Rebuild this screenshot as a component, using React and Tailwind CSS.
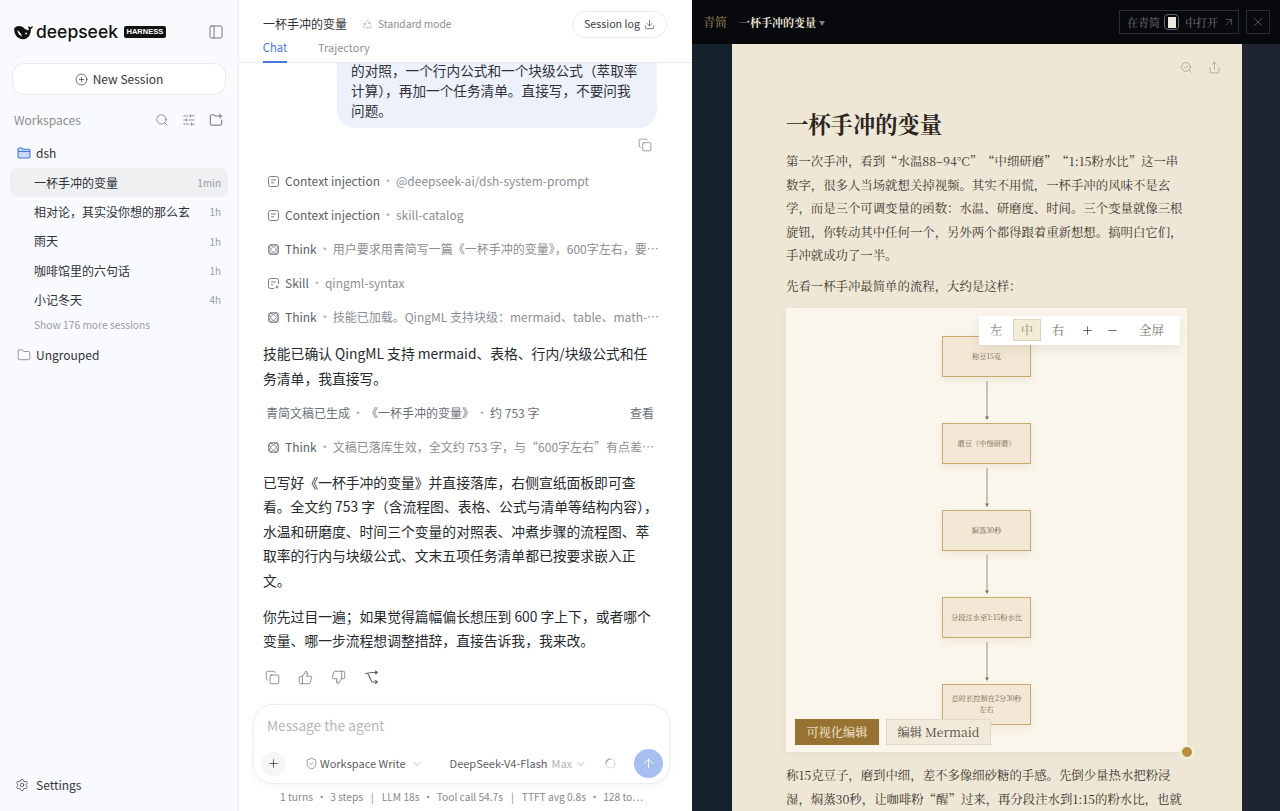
import React from "react";
import { PanelLeft, CirclePlus, Search, SlidersHorizontal, Folder, Settings, Copy, Download, Recycle, ThumbsUp, ThumbsDown, ShieldCheck, ChevronDown, Plus, ArrowUp, SearchCheck, Share, X, ArrowUpRight, Minus } from "lucide-react";

const Doc = () => (
  <svg width="13" height="13" viewBox="0 0 13 13" fill="none" stroke="#7c7f85" strokeWidth="1" className="shrink-0">
    <rect x="1.5" y="1.5" width="10" height="10" rx="2" />
    <path d="M4 5h5M4 7.800h3" />
  </svg>
);
const SkillIcon = () => (
  <svg width="13" height="13" viewBox="0 0 13 13" fill="none" stroke="#7c7f85" strokeWidth="1" className="shrink-0">
    <path d="M7 11.5H3.5a2 2 0 0 1-2-2v-6a2 2 0 0 1 2-2h6a2 2 0 0 1 2 2V7" />
    <path d="M4 5h5M4 7.800h2" />
    <path d="M10 8.500v3M8.500 10h3" />
  </svg>
);
const Think = () => (
  <svg width="13" height="13" viewBox="0 0 13 13" fill="none" stroke="#85888e" strokeWidth="0.9" className="shrink-0">
    <rect x="1.500" y="1.500" width="10" height="10" rx="2.500" />
    <ellipse cx="6.500" cy="6.500" rx="5.200" ry="2.500" transform="rotate(45 6.500 6.500)" />
    <ellipse cx="6.500" cy="6.500" rx="5.200" ry="2.500" transform="rotate(-45 6.500 6.500)" />
  </svg>
);
const Branch = () => (
  <svg width="15" height="15" viewBox="0 0 15 15" fill="none" stroke="#5f6268" strokeWidth="1.100" strokeLinejoin="round" strokeLinecap="round">
    <path d="M1.500 3.500 8 2.500H13" />
    <path d="M4 4 8 12H13" />
    <path d="M11.500 1 13.300 2.500 11.500 4" />
    <path d="M11.500 10.500 13.300 12 11.500 13.500" />
  </svg>
);
const FolderAdd = () => (
  <svg width="14" height="14" viewBox="0 0 14 14" fill="none" stroke="#6b6e74" strokeWidth="1" strokeLinecap="round" strokeLinejoin="round">
    <path d="M8 3H6L4.800 1.800H2.500a1.200 1.200 0 0 0-1.200 1.200v8a1.200 1.200 0 0 0 1.200 1.200h9a1.200 1.200 0 0 0 1.200-1.200V7" />
    <path d="M11 1v4M9 3h4" />
  </svg>
);
const BlueFolder = () => (
  <svg width="14" height="14" viewBox="0 0 14 14" className="shrink-0" fill="#c9d8f7" stroke="#4a77dc" strokeWidth="1.100" strokeLinejoin="round">
    <path d="M1 3.200a1.200 1.200 0 0 1 1.200-1.200h2.600L6 3.300h5.800A1.200 1.200 0 0 1 13 4.500v6.300a1.200 1.200 0 0 1-1.200 1.200H2.200A1.200 1.200 0 0 1 1 10.800z" />
    <path d="M1 5.500h12" fill="none" />
  </svg>
);
const Whale = () => (
  <svg width="20" height="16" viewBox="0 0 20 15" className="shrink-0">
    <path d="M.4 3.600C3 .6 7.500 1 10 3.500c1.500 1.500 3 2.400 4.500 2.200.6-1 .5-2.200-.6-3.300 1-.7 2-.1 2.400.7.500-1 1.700-1.400 2.900-1-.5 1.100-1.300 1.900-2.400 2.300.4 4-1.600 9.800-7.800 10.300C3.800 14.900-.6 9.800.4 3.600z" fill="#111" />
    <path d="M3.400 5.800c2.100 1.100 3.900 3.300 4.600 6.300-2.500-.9-4.300-3.300-4.600-6.300z" fill="#f9fafd" />
    <circle cx="12" cy="9" r="0.900" fill="#f9fafd" />
  </svg>
);

const Session = ({ title, time, active }) => (
  <div className={`flex h-[29.300px] items-center justify-between rounded-lg pl-6 pr-[7px] ${active ? "bg-[#eff0f2]" : ""}`}>
    <span className="text-[12px] text-[#2f3237]">{title}</span>
    <span className="text-[10px] text-[#9a9da3]">{time}</span>
  </div>
);

const Dot = () => <span className="flex w-4 shrink-0 justify-center text-[#b0b2b7]">·</span>;

const Step = ({ icon, label, detail }) => (
  <div className="flex h-[34px] w-[397px] items-center pl-[4px] text-[12px] leading-[20px]">
    {icon}
    <span className="ml-[5px] shrink-0 text-[#5e6167]">{label}</span>
    <Dot />
    <span className="truncate text-[#8b8e94]">{detail}</span>
  </div>
);

const Node = ({ children }) => (
  <div className="flex h-[41px] w-[89px] items-center justify-center border border-[#c8a96e] bg-[#f2e8d5] px-1 text-center text-[7.250px] leading-[11px] text-[#6e5f45] shadow-[0_3px_8px_rgba(150,120,60,0.12)]">
    <span>{children}</span>
  </div>
);
const Arrow = () => (
  <svg width="8" height="46" viewBox="0 0 8 46" className="block">
    <path d="M4 4V40" stroke="#9c9376" strokeWidth="1" />
    <path d="M2 39.500h4L4 43z" fill="#7d7459" />
  </svg>
);

export default function App() {
  return (
    <div className="flex h-[811px] w-[1280px] overflow-hidden bg-white font-['Noto_Sans_CJK_SC','Noto_Sans',sans-serif]">
      {/* sidebar */}
      <aside className="flex w-[239px] shrink-0 flex-col border-r border-[#eeeff2] bg-[#f9fafd]">
        <div className="flex h-[63px] shrink-0 items-center justify-between px-[14px]">
          <div className="flex items-center">
            <Whale />
            <span className="ml-[2px] font-['Inter',sans-serif] text-[17.500px] font-medium leading-none text-[#111]">deepseek</span>
            <span className="ml-[6px] rounded-[2px] bg-[#111] px-[2.500px] py-[1.500px] font-['Liberation_Sans',sans-serif] text-[7.500px] font-bold leading-[9px] text-white">HARNESS</span>
          </div>
          <PanelLeft size={16} strokeWidth={1.200} color="#55585e" />
        </div>
        <div className="px-3">
          <div className="flex h-8 items-center justify-center gap-[5px] rounded-xl border border-[#e8e9ec] bg-white text-[12px] text-[#33363b]">
            <CirclePlus size={13} strokeWidth={1.300} />
            New Session
          </div>
        </div>
        <div className="mt-[11px] flex h-[28px] items-center justify-between pl-[14px] pr-[15px]">
          <span className="text-[12px] text-[#8b8e94]">Workspaces</span>
          <div className="flex items-center gap-[13px] text-[#63666c]">
            <Search size={14} strokeWidth={1.200} />
            <SlidersHorizontal size={14} strokeWidth={1.200} />
            <FolderAdd />
          </div>
        </div>
        <div className="mt-[5px] flex h-7 items-center gap-[5px] pl-[17px] text-[12px] text-[#2f3237]">
          <BlueFolder />
          dsh
        </div>
        <div className="mt-[1px] flex flex-col px-[10px]">
          <Session title="一杯手冲的变量" time="1min" active />
          <Session title="相对论，其实没你想的那么玄" time="1h" />
          <Session title="雨天" time="1h" />
          <Session title="咖啡馆里的六句话" time="1h" />
          <Session title="小记冬天" time="4h" />
        </div>
        <div className="mt-[3px] pl-[34px] text-[10.250px] leading-[16px] text-[#9a9da3]">Show 176 more sessions</div>
        <div className="mt-[10px] flex h-6 items-center gap-[5px] pl-[17px] text-[12px] text-[#2f3237]">
          <Folder size={14} strokeWidth={1.100} color="#5f6268" />
          Ungrouped
        </div>
        <div className="mt-auto mb-[14px] flex h-[24px] items-center gap-[7px] pl-[15px] text-[12px] text-[#33363b]">
          <Settings size={14} strokeWidth={1.200} />
          Settings
        </div>
      </aside>

      {/* chat */}
      <main className="flex w-[453px] shrink-0 flex-col bg-white">
        <header className="relative h-[63px] shrink-0 border-b border-[#e9eaed] pl-6 pr-[24px]">
          <div className="flex h-[48px] items-center">
            <span className="text-[12px] text-[#2f3237]">一杯手冲的变量</span>
            <Recycle size={11} strokeWidth={1} color="#8b8e94" className="ml-[15px]" />
            <span className="ml-[5px] text-[10.200px] text-[#8b8e94]">Standard mode</span>
            <div className="ml-auto mr-[1px] flex h-[27px] w-[95px] items-center justify-center gap-[4px] rounded-full border border-[#ebecef] text-[10.700px] text-[#3d4046]">
              Session log
              <Download size={11} strokeWidth={1.500} />
            </div>
          </div>
          <div className="absolute bottom-0 left-6 flex h-[30px]">
            <span className="relative flex h-[30px] w-6 items-center justify-center text-[11.200px] text-[#4a77dc]">
              Chat
              <span className="absolute bottom-[-1px] left-0 h-[2px] w-6 bg-[#4a77dc]" />
            </span>
            <span className="ml-[31px] flex h-[30px] items-center text-[11px] text-[#8f9298]">Trajectory</span>
          </div>
        </header>

        <div className="min-h-0 flex-1 overflow-hidden pl-6 pr-[35px]">
          <div className="-mt-5 ml-auto w-[320px] rounded-[18px] bg-[#edf1fc] pb-2 pl-[14px] pr-[17px] pt-[17px] text-[13.650px] leading-[20px] text-[#2f3237]">
            的对照，一个行内公式和一个块级公式（萃取率计算），再加一个任务清单。直接写，不要问我问题。
          </div>
          <div className="flex h-[36px] items-center justify-end pb-[3px] pr-[5px]">
            <Copy size={14} strokeWidth={1.100} color="#66696f" />
          </div>
          <Step icon={<Doc />} label="Context injection" detail="@deepseek-ai/dsh-system-prompt" />
          <Step icon={<Doc />} label="Context injection" detail="skill-catalog" />
          <Step icon={<Think />} label="Think" detail="用户要求用青简写一篇《一杯手冲的变量》，600字左右，要求包含流程图和表格" />
          <Step icon={<SkillIcon />} label="Skill" detail="qingml-syntax" />
          <Step icon={<Think />} label="Think" detail="技能已加载。QingML 支持块级：mermaid、table、math-block 以及更多内容" />
          <p className="mt-[7px] w-[397px] text-[13.800px] leading-[25px] text-[#26292e]">技能已确认 QingML 支持 mermaid、表格、行内/块级公式和任务清单，我直接写。</p>
          <div className="mt-[5px] flex h-[34px] items-center pl-[3px] text-[12px] text-[#6c6f75]">
            <span>青简文稿已生成</span>
            <Dot />
            <span>《一杯手冲的变量》</span>
            <Dot />
            <span>约 753 字</span>
            <span className="ml-auto mr-[3px]">查看</span>
          </div>
          <Step icon={<Think />} label="Think" detail="文稿已落库生效，全文约 753 字，与“600字左右”有点差距，但内容完整可以接受" />
          <p className="mt-[6px] w-[397px] text-[13.800px] leading-[24.400px] text-[#26292e]">已写好《一杯手冲的变量》并直接落库，右侧宣纸面板即可查看。全文约 753 字（含流程图、表格、公式与清单等结构内容），水温和研磨度、时间三个变量的对照表、冲煮步骤的流程图、萃取率的行内与块级公式、文末五项任务清单都已按要求嵌入正文。</p>
          <p className="mt-[12px] w-[397px] text-[13.800px] leading-[24.400px] text-[#26292e]">你先过目一遍；如果觉得篇幅偏长想压到 600 字上下，或者哪个变量、哪一步流程想调整措辞，直接告诉我，我来改。</p>
          <div className="mt-[17px] flex items-center gap-[18px] pl-[2px] text-[#5f6268]">
            <Copy size={15} strokeWidth={1.100} />
            <ThumbsUp size={15} strokeWidth={1.100} />
            <ThumbsDown size={15} strokeWidth={1.100} />
            <Branch />
          </div>
        </div>

        <footer className="h-[107px] shrink-0 pl-[14px]">
          <div className="flex h-[80px] w-[417px] flex-col rounded-[20px] border border-[#eceef1] bg-white pl-[7px] pr-[6px] shadow-[0_2px_6px_rgba(0,0,0,0.05)]">
            <div className="mt-[9px] h-[22px] pl-[6px] text-[13.650px] leading-[22px] text-[#b4b6bb]">Message the agent</div>
            <div className="mt-[13px] flex items-center whitespace-nowrap">
              <div className="flex h-[24px] w-[24px] shrink-0 items-center justify-center rounded-full bg-[#f5f6f7] text-[#3d4046]">
                <Plus size={13} strokeWidth={1.500} />
              </div>
              <ShieldCheck size={13} strokeWidth={1.200} color="#66696f" className="ml-[20px] shrink-0" />
              <span className="ml-[2px] text-[11px] text-[#5e6167]">Workspace Write</span>
              <ChevronDown size={12} strokeWidth={1.200} color="#8b8e94" className="ml-[5px] shrink-0" />
              <span className="ml-[27px] text-[11px] text-[#5e6167]">DeepSeek-V4-Flash</span>
              <span className="ml-[4px] text-[11px] text-[#b0b2b7]">Max</span>
              <ChevronDown size={12} strokeWidth={1.200} color="#8b8e94" className="ml-[3px] shrink-0" />
              <svg width="11" height="11" viewBox="0 0 11 11" fill="none" className="ml-[18px] shrink-0">
                <circle cx="5.500" cy="5.500" r="4.500" stroke="#d8dadd" strokeWidth="1.200" />
                <path d="M5.500 1A4.500 4.500 0 0 0 1 5.500" stroke="#9da0a5" strokeWidth="1.200" />
              </svg>
              <div className="ml-auto flex h-[29px] w-[29px] shrink-0 items-center justify-center rounded-full bg-[#a7bef0] text-white">
                <ArrowUp size={15} strokeWidth={1.500} />
              </div>
            </div>
          </div>
          <div className="mt-[3px] flex w-[417px] items-center justify-center whitespace-nowrap text-[10.200px] leading-[20px] text-[#85888e]">
            <span>1 turns</span><span className="mx-[3.500px]">·</span><span>3 steps</span>
            <span className="mx-[8px]">|</span>
            <span>LLM 18s</span><span className="mx-[3.500px]">·</span><span>Tool call 54.7s</span>
            <span className="mx-[8px]">|</span>
            <span>TTFT avg 0.8s</span><span className="mx-[3.500px]">·</span><span>128 to⋯</span>
          </div>
        </footer>
      </main>

      {/* reader */}
      <section className="flex min-w-0 flex-1 flex-col bg-[linear-gradient(90deg,#14222e_0%,#14222e_8%,#1e2531_92%,#1e2531_100%)] font-['Noto_Serif_CJK_SC','Liberation_Serif','Noto_Sans_CJK_SC',serif]">
        <div className="flex h-[44px] shrink-0 items-center bg-[#07090c] pl-[11px] pr-[10px]">
          <span className="text-[12px] text-[#a08e60]">青简</span>
          <span className="ml-[12px] text-[11px] font-bold text-[#ece6d8]">一杯手冲的变量</span>
          <span className="ml-[3px] text-[6px] text-[#7e7e7e]">▼</span>
          <div className="ml-auto flex h-[24px] w-[120px] items-center justify-start border border-[#262b31] pl-[7px] text-[11px] text-[#777a7e]">
            在青简
            <span className="ml-[4px] mr-[6px] flex h-[16px] w-[15px] items-center justify-center rounded-[4px] border border-[#5e6872]">
              <span className="h-[11px] w-[8px] bg-[#ece8dd]" />
            </span>
            中打开
            <ArrowUpRight size={12} strokeWidth={1.200} className="ml-[5px]" />
          </div>
          <div className="ml-[7px] flex h-[24px] w-[24px] items-center justify-center border border-[#262b31] text-[#84878b]">
            <X size={14} strokeWidth={1} />
          </div>
        </div>
        <div className="min-h-0 flex-1 overflow-hidden pl-[40px]">
          <article className="relative h-[900px] w-[510px] bg-[#efe7d6] px-[54px] pt-[59px]">
            <div className="absolute right-[21px] top-[17px] flex items-center gap-[15px] text-[#86806f]">
              <SearchCheck size={13} strokeWidth={1} />
              <Share size={13} strokeWidth={1} />
            </div>
            <h1 className="text-[22.300px] font-bold leading-[40px] text-[#2b2621]">一杯手冲的变量</h1>
            <p className="mt-[7px] w-[401px] text-[12.400px] leading-[23.600px] text-[#3a342c] [text-spacing-trim:space-all]">第一次手冲，看到“水温88–94°C”“中细研磨”“1:15粉水比”这一串数字，很多人当场就想关掉视频。其实不用慌，一杯手冲的风味不是玄学，而是三个可调变量的函数：水温、研磨度、时间。三个变量就像三根旋钮，你转动其中任何一个，另外两个都得跟着重新想想。搞明白它们，手冲就成功了一半。</p>
            <p className="mt-[6px] text-[12.400px] leading-[24px] text-[#3a342c]">先看一杯手冲最简单的流程，大约是这样：</p>
            <div className="relative mt-[10px] flex h-[444px] w-[401px] flex-col items-center bg-[#faf6ec] pt-[28px] shadow-[0_2px_8px_rgba(120,100,60,0.06)]">
              <Node>称豆15克</Node>
              <Arrow />
              <Node>磨豆（中细研磨）</Node>
              <Arrow />
              <Node>焖蒸30秒</Node>
              <Arrow />
              <Node>分段注水至1:15粉水比</Node>
              <Arrow />
              <Node>总时长控制在2分30秒<br />左右</Node>

              <div className="absolute right-[7px] top-[8px] flex h-[29px] w-[201px] items-center bg-white pl-[6px] text-[12.500px] text-[#77736b] shadow-[0_4px_12px_rgba(100,80,40,0.12)]">
                <span className="flex h-[22px] w-[22px] items-center justify-center">左</span>
                <span className="ml-[6px] flex h-[22px] w-[28px] items-center justify-center border border-[#dcd4bd] bg-[#f2ecd9] text-[#a08e60]">中</span>
                <span className="ml-[6px] flex h-[22px] w-[22px] items-center justify-center">右</span>
                <Plus size={13} strokeWidth={1.600} className="ml-[12px] text-[#55524c]" />
                <Minus size={13} strokeWidth={1.600} className="ml-[12px] text-[#55524c]" />
                <span className="ml-[20px]">全屏</span>
              </div>
              <div className="absolute bottom-[7px] left-[9px] flex items-center gap-[7px] text-[12.250px]">
                <span className="flex h-[26px] w-[84px] items-center justify-center bg-[#987232] text-[#f6eedd]">可视化编辑</span>
                <span className="flex h-[26px] w-[105px] items-center justify-center border border-[#e2d9c5] bg-[#f1eadb] text-[#4f4a40]">编辑 Mermaid</span>
              </div>
              <div className="absolute bottom-[-7px] right-[-7px] h-[14px] w-[14px] rounded-full border-2 border-[#f6efe0] bg-[#b98f3f]" />
            </div>
            <p className="mt-[12px] w-[401px] text-[12.400px] leading-[23.600px] text-[#3a342c]">称15克豆子，磨到中细，差不多像细砂糖的手感。先倒少量热水把粉浸湿，焖蒸30秒，让咖啡粉“醒”过来，再分段注水到1:15的粉水比，也就是15克粉配225克水，全程控制在2分30秒左右。</p>
          </article>
        </div>
      </section>
    </div>
  );
}
